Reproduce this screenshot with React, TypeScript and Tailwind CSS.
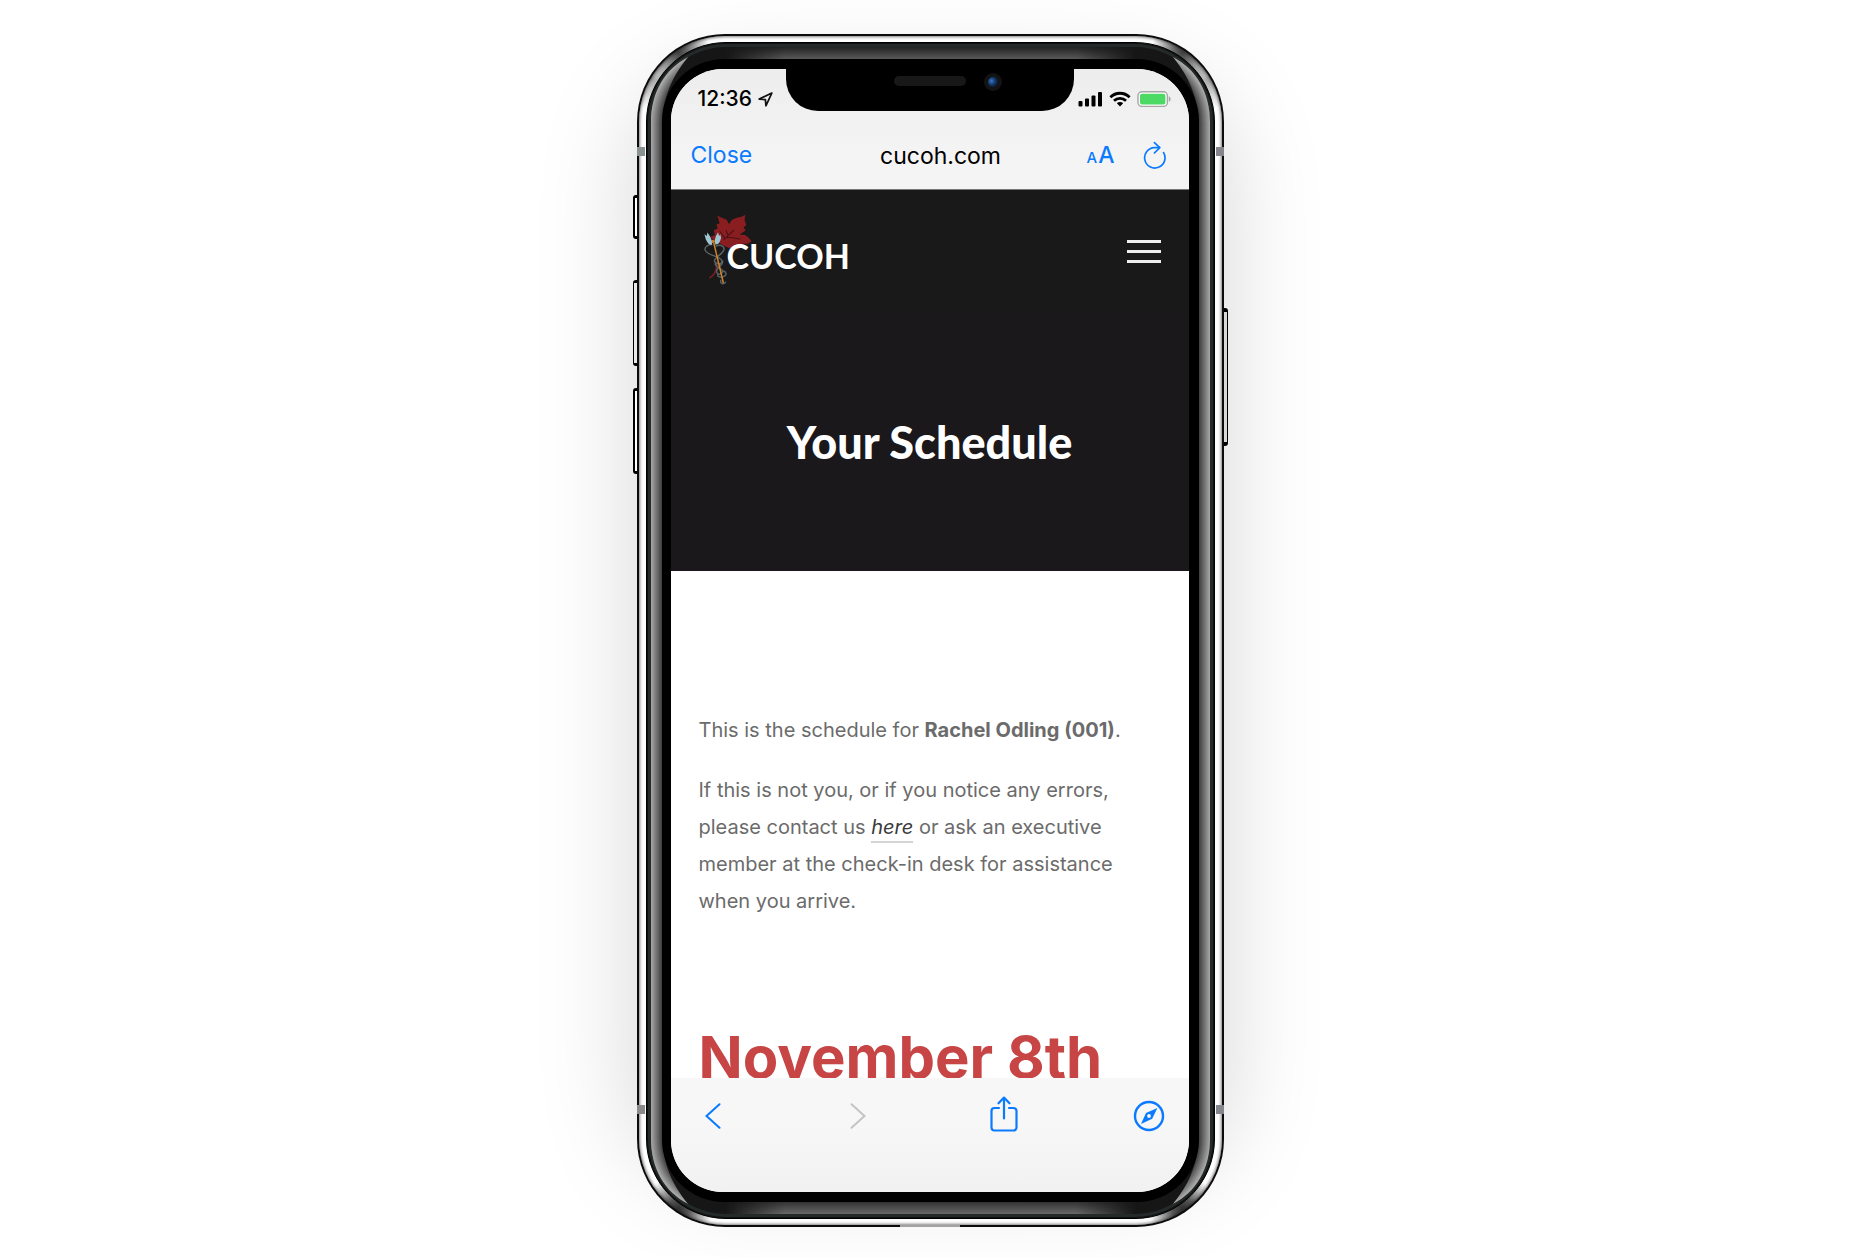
import type { ReactNode } from 'react';

const BLUE = '#0a7aff';

function Corner({ className }: { className: string }) {
  const id = `glint-${className.replace(/[^a-z0-9]/g, '')}`;
  return (
    <svg aria-hidden="true" width="75" height="75" viewBox="0 0 75 75" className={`absolute ${className}`}>
      <defs>
        <radialGradient id={id} gradientUnits="userSpaceOnUse" cx="75" cy="75" r="75">
          <stop offset="0.84" stopColor="#333" />
          <stop offset="0.93" stopColor="#777" />
          <stop offset="1" stopColor="#a8a8a8" />
        </radialGradient>
      </defs>
      <path d="M0 75A75 75 0 0 1 75 0V13A62 62 0 0 0 13 75Z" fill="#161616" />
      <path d="M0 75C0 45 14 22 37 10C26 24 12 44 12 75Z" fill={`url(#${id})`} />
    </svg>
  );
}

function PhoneFrame({ children }: { children: ReactNode }) {
  return (
    <div className="relative w-full max-w-[587px]">
      <div className="absolute inset-x-0 inset-y-12 rounded-[88px] shadow-[0_0_100px_rgba(0,0,0,0.17)]" />
      <div className="absolute top-[161px] -left-1 h-11 w-2 rounded-l-[3px] border-2 border-y-[3px] border-black bg-white" />
      <div className="absolute top-[246px] -left-1 h-[86px] w-2 rounded-l-[3px] border border-y-[3px] border-black bg-[#e8eae8]" />
      <div className="absolute top-[354px] -left-1 h-[86px] w-2 rounded-l-[3px] border-2 border-y-[3px] border-black bg-white" />
      <div className="absolute top-[274px] -right-1 h-[138px] w-2 rounded-r-[3px] border border-y-4 border-black bg-[#d8d8d4]" />
      <div className="relative rounded-[88px] bg-[#0c0c0c] p-0.5">
        <div className="rounded-[86px] bg-white bg-[radial-gradient(circle_at_40px_17px,#444_0,#666_8px,transparent_32px),radial-gradient(circle_at_calc(100%-40px)_17px,#444_0,#666_8px,transparent_32px),radial-gradient(circle_at_40px_calc(100%-17px),#333_0,#555_10px,transparent_34px),radial-gradient(circle_at_calc(100%-40px)_calc(100%-17px),#333_0,#555_10px,transparent_34px),radial-gradient(circle_at_14px_44px,#aaa_0,transparent_30px),radial-gradient(circle_at_calc(100%-14px)_44px,#aaa_0,transparent_30px)] px-[7px] py-1.5 shadow-[inset_0_0_3px_1px_rgba(0,0,0,0.5)]">
          <div className="rounded-[80px] border border-black bg-[#24292a] p-1 shadow-[inset_0_0_0_1px_#111]">
            <div className="relative rounded-[75px] bg-[linear-gradient(to_right,#a8a8a8_0,#777_5px,#333_12px,#161616_50%,#333_calc(100%-12px),#777_calc(100%-5px),#a8a8a8_100%)] px-[11px] py-3">
              <div className="absolute inset-x-[74px] top-0 h-3 bg-[#161616]">
                <div className="h-full bg-[linear-gradient(to_bottom,#222,#585858)] [mask-image:linear-gradient(to_right,transparent,black_60px,black_calc(100%-60px),transparent)]" />
              </div>
              <div className="absolute inset-x-[74px] bottom-0 h-3 bg-[#161616]">
                <div className="h-full bg-[linear-gradient(to_bottom,#333,#686868)] [mask-image:linear-gradient(to_right,transparent,black_60px,black_calc(100%-60px),transparent)]" />
              </div>
              <Corner className="top-0 left-0" />
              <Corner className="top-0 right-0 -scale-x-100" />
              <Corner className="bottom-0 left-0 -scale-y-100" />
              <Corner className="right-0 bottom-0 rotate-180" />
              <div className="relative rounded-[62px] bg-black py-2.5 pr-2.5 pl-[9px]">
                <div className="overflow-hidden rounded-[52px] bg-white">{children}</div>
              </div>
            </div>
          </div>
        </div>
        <div className="absolute top-[113px] left-0 h-[9px] w-2 bg-[#8b9292]" />
        <div className="absolute top-[113px] right-0 h-[9px] w-2 bg-[#85858c]" />
        <div className="absolute bottom-[113px] left-0 h-[9px] w-2 bg-[#8b8b8b]" />
        <div className="absolute right-0 bottom-[113px] h-[9px] w-2 bg-[#85858c]" />
        <div className="absolute bottom-0 left-1/2 h-0.5 w-[60px] -translate-x-1/2 bg-[#a3a3a3]" />
      </div>
    </div>
  );
}

function StatusBar() {
  return (
    <div className="grid grid-cols-[1fr_288px_1fr]">
      <div className="flex items-center gap-1.5 pt-[18px] pl-[27px]">
        <span className="text-[21px] leading-6 font-medium text-black">12:36</span>
        <svg aria-hidden="true" width="15" height="15" viewBox="0 0 15 15" fill="none" stroke="#111" strokeWidth="1.7" strokeLinejoin="round">
          <path d="M13.8 1.1L1.2 7.1L7.4 7.6L7.9 13.8Z" />
        </svg>
      </div>
      <div className="flex h-[42px] justify-center gap-[18px] rounded-b-[32px] bg-black pt-1 pl-9">
        <div className="mt-[3px] h-2.5 w-[72px] rounded-full bg-[#181818]" />
        <div className="flex size-[18px] items-center justify-center rounded-full bg-[#131316]">
          <div className="size-2.5 rounded-full bg-[radial-gradient(circle_at_35%_40%,#3f76b8_0,#123a70_40%,#0a1830_75%)]" />
        </div>
      </div>
      <div className="flex items-center pt-[18px] pl-1">
        <svg aria-hidden="true" width="25" height="16" viewBox="0 0 25 16" fill="#000">
          <rect x="0.5" y="10" width="4" height="5.5" rx="1" />
          <rect x="7" y="7.5" width="4" height="8" rx="1" />
          <rect x="13.5" y="4.5" width="4" height="11" rx="1" />
          <rect x="20" y="1" width="4" height="14.5" rx="1" />
        </svg>
        <svg aria-hidden="true" width="22" height="16" viewBox="0 0 22 16" fill="none" stroke="#000" strokeWidth="2.8" className="ml-1.5">
          <path d="M1.4 6.2A13.6 13.6 0 0 1 20.6 6.2" />
          <path d="M5 9.8A8.6 8.6 0 0 1 17 9.8" />
          <path d="M11 15.6L7.8 12.3A4.6 4.6 0 0 1 14.2 12.3Z" fill="#000" stroke="none" />
        </svg>
        <svg aria-hidden="true" width="34" height="16" viewBox="0 0 34 16" className="ml-1.5">
          <rect x="1" y="0.8" width="29.4" height="14.6" rx="4" fill="#fff" stroke="#a6a6a6" strokeWidth="1.4" />
          <rect x="3" y="2.8" width="25.4" height="10.6" rx="2" fill="#4cd964" />
          <path d="M31.8 5.2C34.2 6 34.2 10 31.8 10.8Z" fill="#a6a6a6" />
        </svg>
      </div>
    </div>
  );
}

function BrowserBar() {
  return (
    <div className="grid grid-cols-[1fr_auto_1fr] items-center pt-[26px] pr-[22px] pb-[17px] pl-5 text-[23px] leading-7">
      <button type="button" className="justify-self-start text-[#0a7aff]">Close</button>
      <span className="pt-0.5 pl-6 text-black">cucoh.com</span>
      <div className="flex items-center gap-7 justify-self-end">
        <button type="button" aria-label="Text size" className="flex items-baseline gap-px pt-1 font-medium text-[#0a7aff]">
          <span className="text-[15px]">A</span>
          <span>A</span>
        </button>
        <button type="button" aria-label="Reload">
          <svg width="24" height="28" viewBox="0 0 24 28" fill="none" stroke={BLUE} strokeWidth="1.7" strokeLinecap="round" strokeLinejoin="round">
            <path d="M20.6 11.6A10.2 10.2 0 1 1 11.4 6.6H16.4" />
            <path d="M11.4 1.6L16.8 6.6L11.4 12" />
          </svg>
        </button>
      </div>
    </div>
  );
}

function Logo() {
  return (
    <a href="#home" aria-label="CUCOH" className="flex items-center">
      <svg aria-hidden="true" width="50" height="73" viewBox="130 85 150 220" fill="none">
        <path d="M173 93L190 101L201 105L208 119L217 105L232 99L244 97L257 90L255 105L260 122L252 128L258 138L240 150L256 151L266 158L276 170L265 178L246 178L236 186L238 195L222 196L204 189L182 178L150 158L166 151L162 138L174 131L170 120L180 116Z" fill="#8a1d20" />
        <path d="M192 166Q204 154 223 137M205 152L199 137M201 158Q222 158 242 164M196 162L180 140" stroke="#4c1315" strokeWidth="3.5" />
        <path d="M172 232C172 256 164 274 149 281" stroke="#7a1d20" strokeWidth="5" />
        <path d="M158 180C144 180 134 187 136 196C140 214 182 214 186 228C190 246 160 238 165 226C170 214 192 208 193 193C193 184 178 178 168 186M168 232C158 250 196 252 188 264C182 274 168 268 171 258C176 244 194 242 188 228M176 266C166 284 200 280 199 268C198 260 190 258 186 262M184 286C178 300 196 302 198 292" stroke="#596164" strokeWidth="4.5" />
        <path d="M160 166L191 296" stroke="#d0842b" strokeWidth="4.5" />
        <circle cx="160" cy="171" r="5.5" fill="#d27a25" />
        <path d="M134 149L141 154L143 144L151 156L156 168L157 181L148 180L142 172L138 164Z" fill="#9fc7d3" />
        <path d="M182 149L178 154L175 143L168 156L165 168L167 181L176 178L181 170L184 160Z" fill="#9fc7d3" />
      </svg>
      <span className="mt-3 -ml-[26px] font-[Lato,sans-serif] text-[34px] leading-9 font-bold text-white">CUCOH</span>
    </a>
  );
}

function SiteHeader() {
  return (
    <>
      <nav className="flex items-center justify-between border-t border-[#777] bg-[#191919] pt-[23px] pr-7 pb-7 pl-8">
        <Logo />
        <button type="button" aria-label="Menu" className="mt-[3px] flex w-[34px] flex-col gap-[7px]">
          <span className="h-[3px] w-full bg-[#eee]" />
          <span className="h-[3px] w-full bg-[#eee]" />
          <span className="h-[3px] w-full bg-[#eee]" />
        </button>
      </nav>
      <div className="bg-[#1a181b] px-6 py-[103px]">
        <h1 className="text-center font-[Lato,sans-serif] text-[45px] leading-[51px] font-black text-white">Your Schedule</h1>
      </div>
    </>
  );
}

function Schedule() {
  return (
    <section className="overflow-hidden bg-white px-7 pt-[141px] text-xl leading-[37px] text-[#6b6b6b]">
      <p>
        This is the schedule for <strong className="font-bold">Rachel Odling (001)</strong>.
      </p>
      <p className="mt-[23px]">
        If this is not you, or if you notice any errors, please contact us{' '}
        <a href="#contact" className="border-b-2 border-[#d4d4d4] pb-0.5 text-[#3a3a3a] italic">here</a> or ask an executive member at the
        check-in desk for assistance when you arrive.
      </p>
      <h2 className="mt-[107px] -mb-[9px] text-[58px] leading-[60px] font-bold whitespace-nowrap text-[#c74545]">November 8th</h2>
    </section>
  );
}

function Toolbar() {
  return (
    <div className="relative flex items-start justify-between bg-[linear-gradient(to_bottom,#f7f7f7_40%,#f1f1f1)] pt-[17px] pr-[23px] pb-[59px] pl-[26px]">
      <button type="button" aria-label="Back" className="flex h-[38px] w-8 items-center justify-center">
        <svg width="16" height="26" viewBox="0 0 16 26" fill="none" stroke={BLUE} strokeWidth="2" strokeLinecap="round" className="mt-1">
          <path d="M14.5 1.2L1.5 13L14.5 24.8" />
        </svg>
      </button>
      <button type="button" aria-label="Forward" disabled className="flex h-[38px] w-8 items-center justify-center">
        <svg width="16" height="26" viewBox="0 0 16 26" fill="none" stroke="#c4c4c4" strokeWidth="2" strokeLinecap="round" className="mt-1">
          <path d="M1.5 1.2L14.5 13L1.5 24.8" />
        </svg>
      </button>
      <button type="button" aria-label="Share" className="flex h-[38px] w-8 items-center justify-center">
        <svg width="28" height="36" viewBox="0 0 28 36" fill="none" stroke={BLUE} strokeWidth="2.2" strokeLinecap="round" strokeLinejoin="round">
          <path d="M9 12H4.5A3 3 0 0 0 1.5 15V31.5A3 3 0 0 0 4.5 34.5H23.5A3 3 0 0 0 26.5 31.5V15A3 3 0 0 0 23.5 12H19" />
          <path d="M14 22.5V1.8M8.500 7.300L14 1.600L19.500 7.300" />
        </svg>
      </button>
      <button type="button" aria-label="Open in browser" className="flex h-[38px] w-8 items-center justify-center">
        <svg width="32" height="32" viewBox="0 0 32 32" fill="none" className="mt-1">
          <circle cx="16" cy="16" r="14" stroke={BLUE} strokeWidth="2.4" />
          <path fillRule="evenodd" d="M24.4 8L19.2 18.8L8 24L13 13ZM16 14.1A1.9 1.9 0 1 0 16 17.9A1.9 1.9 0 1 0 16 14.1Z" fill={BLUE} />
        </svg>
      </button>
    </div>
  );
}

export default function App() {
  return (
    <main className="flex min-h-screen items-start justify-center overflow-hidden bg-white pt-[34px] pb-8 font-[Inter,sans-serif]">
      <PhoneFrame>
        <header className="bg-[linear-gradient(to_bottom,#ededed,#f4f4f4_70%)]">
          <StatusBar />
          <BrowserBar />
        </header>
        <SiteHeader />
        <Schedule />
        <Toolbar />
      </PhoneFrame>
    </main>
  );
}
